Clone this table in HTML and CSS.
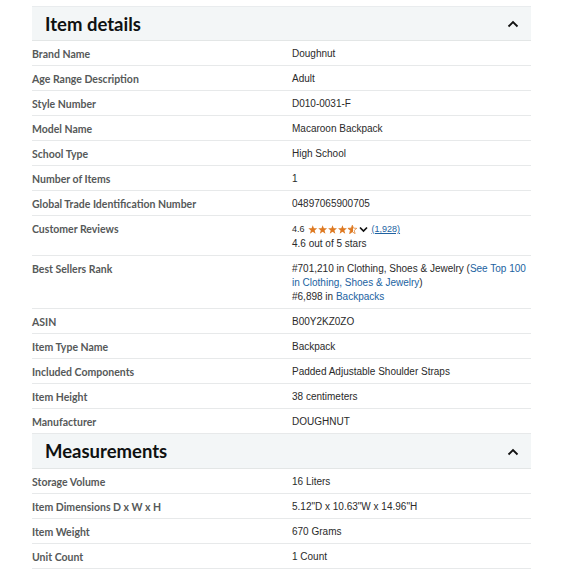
FILE: index.html
```html
<!DOCTYPE html>
<html>
<head>
<meta charset="utf-8">
<link rel="stylesheet" href="styles.css">
</head>
<body>
<div class="wrap">
  <section class="section">
    <div class="head"><h2>Item details</h2><svg class="chev" width="12" height="8" viewBox="0 0 12 8"><path d="M1.5 6.5 L6 2 L10.5 6.5" fill="none" stroke="#111" stroke-width="1.8"/></svg></div>
    <div class="row"><div class="k">Brand Name</div><div class="v">Doughnut</div></div>
    <div class="row"><div class="k">Age Range Description</div><div class="v">Adult</div></div>
    <div class="row"><div class="k">Style Number</div><div class="v">D010-0031-F</div></div>
    <div class="row"><div class="k">Model Name</div><div class="v">Macaroon Backpack</div></div>
    <div class="row"><div class="k">School Type</div><div class="v">High School</div></div>
    <div class="row"><div class="k">Number of Items</div><div class="v">1</div></div>
    <div class="row"><div class="k">Global Trade Identification Number</div><div class="v">04897065900705</div></div>
    <div class="row"><div class="k">Customer Reviews</div><div class="v rev"><div class="rline"><span class="sm">4.6</span><svg class="stars" width="50" height="9" viewBox="0 0 55 10"><defs><path id="st" d="M5 0.2 L6.3 3.5 L9.9 3.7 L7.1 6 L8.1 9.6 L5 7.6 L1.9 9.6 L2.9 6 L0.1 3.7 L3.7 3.5 Z"/><linearGradient id="half"><stop offset="0.55" stop-color="#de7921"/><stop offset="0.55" stop-color="#fff"/></linearGradient></defs><use href="#st" x="0" fill="#de7921"/><use href="#st" x="11" fill="#de7921"/><use href="#st" x="22" fill="#de7921"/><use href="#st" x="33" fill="#de7921"/><use href="#st" x="44" fill="url(#half)" stroke="#de7921" stroke-width="0.8"/></svg><svg class="dd" width="9" height="7" viewBox="0 0 9 7"><path d="M1 1.5 L4.5 5 L8 1.5" fill="none" stroke="#111" stroke-width="1.7"/></svg><a class="cnt">(1,928)</a></div><div>4.6 out of 5 stars</div></div></div>
    <div class="row"><div class="k">Best Sellers Rank</div><div class="v rank">#701,210 in Clothing, Shoes &amp; Jewelry (<a>See Top 100 in Clothing, Shoes &amp; Jewelry</a>)<br>#6,898 in <a>Backpacks</a></div></div>
    <div class="row"><div class="k">ASIN</div><div class="v">B00Y2KZ0ZO</div></div>
    <div class="row"><div class="k">Item Type Name</div><div class="v">Backpack</div></div>
    <div class="row"><div class="k">Included Components</div><div class="v">Padded Adjustable Shoulder Straps</div></div>
    <div class="row"><div class="k">Item Height</div><div class="v">38 centimeters</div></div>
    <div class="row"><div class="k">Manufacturer</div><div class="v">DOUGHNUT</div></div>
  </section>
  <section class="section">
    <div class="head"><h2>Measurements</h2><svg class="chev" width="12" height="8" viewBox="0 0 12 8"><path d="M1.5 6.5 L6 2 L10.5 6.5" fill="none" stroke="#111" stroke-width="1.8"/></svg></div>
    <div class="row"><div class="k">Storage Volume</div><div class="v">16 Liters</div></div>
    <div class="row"><div class="k">Item Dimensions D x W x H</div><div class="v">5.12"D x 10.63"W x 14.96"H</div></div>
    <div class="row"><div class="k">Item Weight</div><div class="v">670 Grams</div></div>
    <div class="row"><div class="k">Unit Count</div><div class="v">1 Count</div></div>
  </section>
</div>
</body>
</html>
```
FILE: styles.css
```css
html, body { margin: 0; padding: 0; background: #fff; }
.wrap { width: 499px; margin: 6px 0 0 32px; }
.head {
  height: 33px;
  background: #f3f6f7;
  border-top: 1px solid #e9ecee;
  border-bottom: 1px solid #e3e6e6;
  display: flex;
  align-items: center;
  justify-content: space-between;
  padding: 0 12px 0 13px;
}
.section + .section .head { border-top: none; height: 34px; }
.head h2 {
  margin: 0;
  font-family: Lato, "Open Sans", sans-serif;
  font-weight: 700;
  font-size: 18.5px;
  color: #0f1111;
}
.chev { display: block; margin-top: 1px; }
.row {
  display: grid;
  grid-template-columns: 260px 1fr;
  border-bottom: 1px solid #e7e9ea;
  padding: 6px 2px 4px 0;
  line-height: 14px;
}
.k {
  font-family: Lato, "Open Sans", sans-serif;
  font-weight: 700;
  font-size: 10.5px;
  color: #565959;
}
.v {
  font-family: "Liberation Sans", Arial, sans-serif;
  font-size: 10px;
  color: #2a2a2a;
}
.rev { line-height: 14.5px; }
.rline { display: flex; align-items: center; }
.sm { font-size: 9px; margin-right: 3px; }
.stars { display: block; margin-right: 1px; }
.dd { display: block; margin-right: 4px; }
.cnt { font-size: 9px; color: #2162a1; text-decoration: underline; }
.rank a { color: #2162a1; }
```
